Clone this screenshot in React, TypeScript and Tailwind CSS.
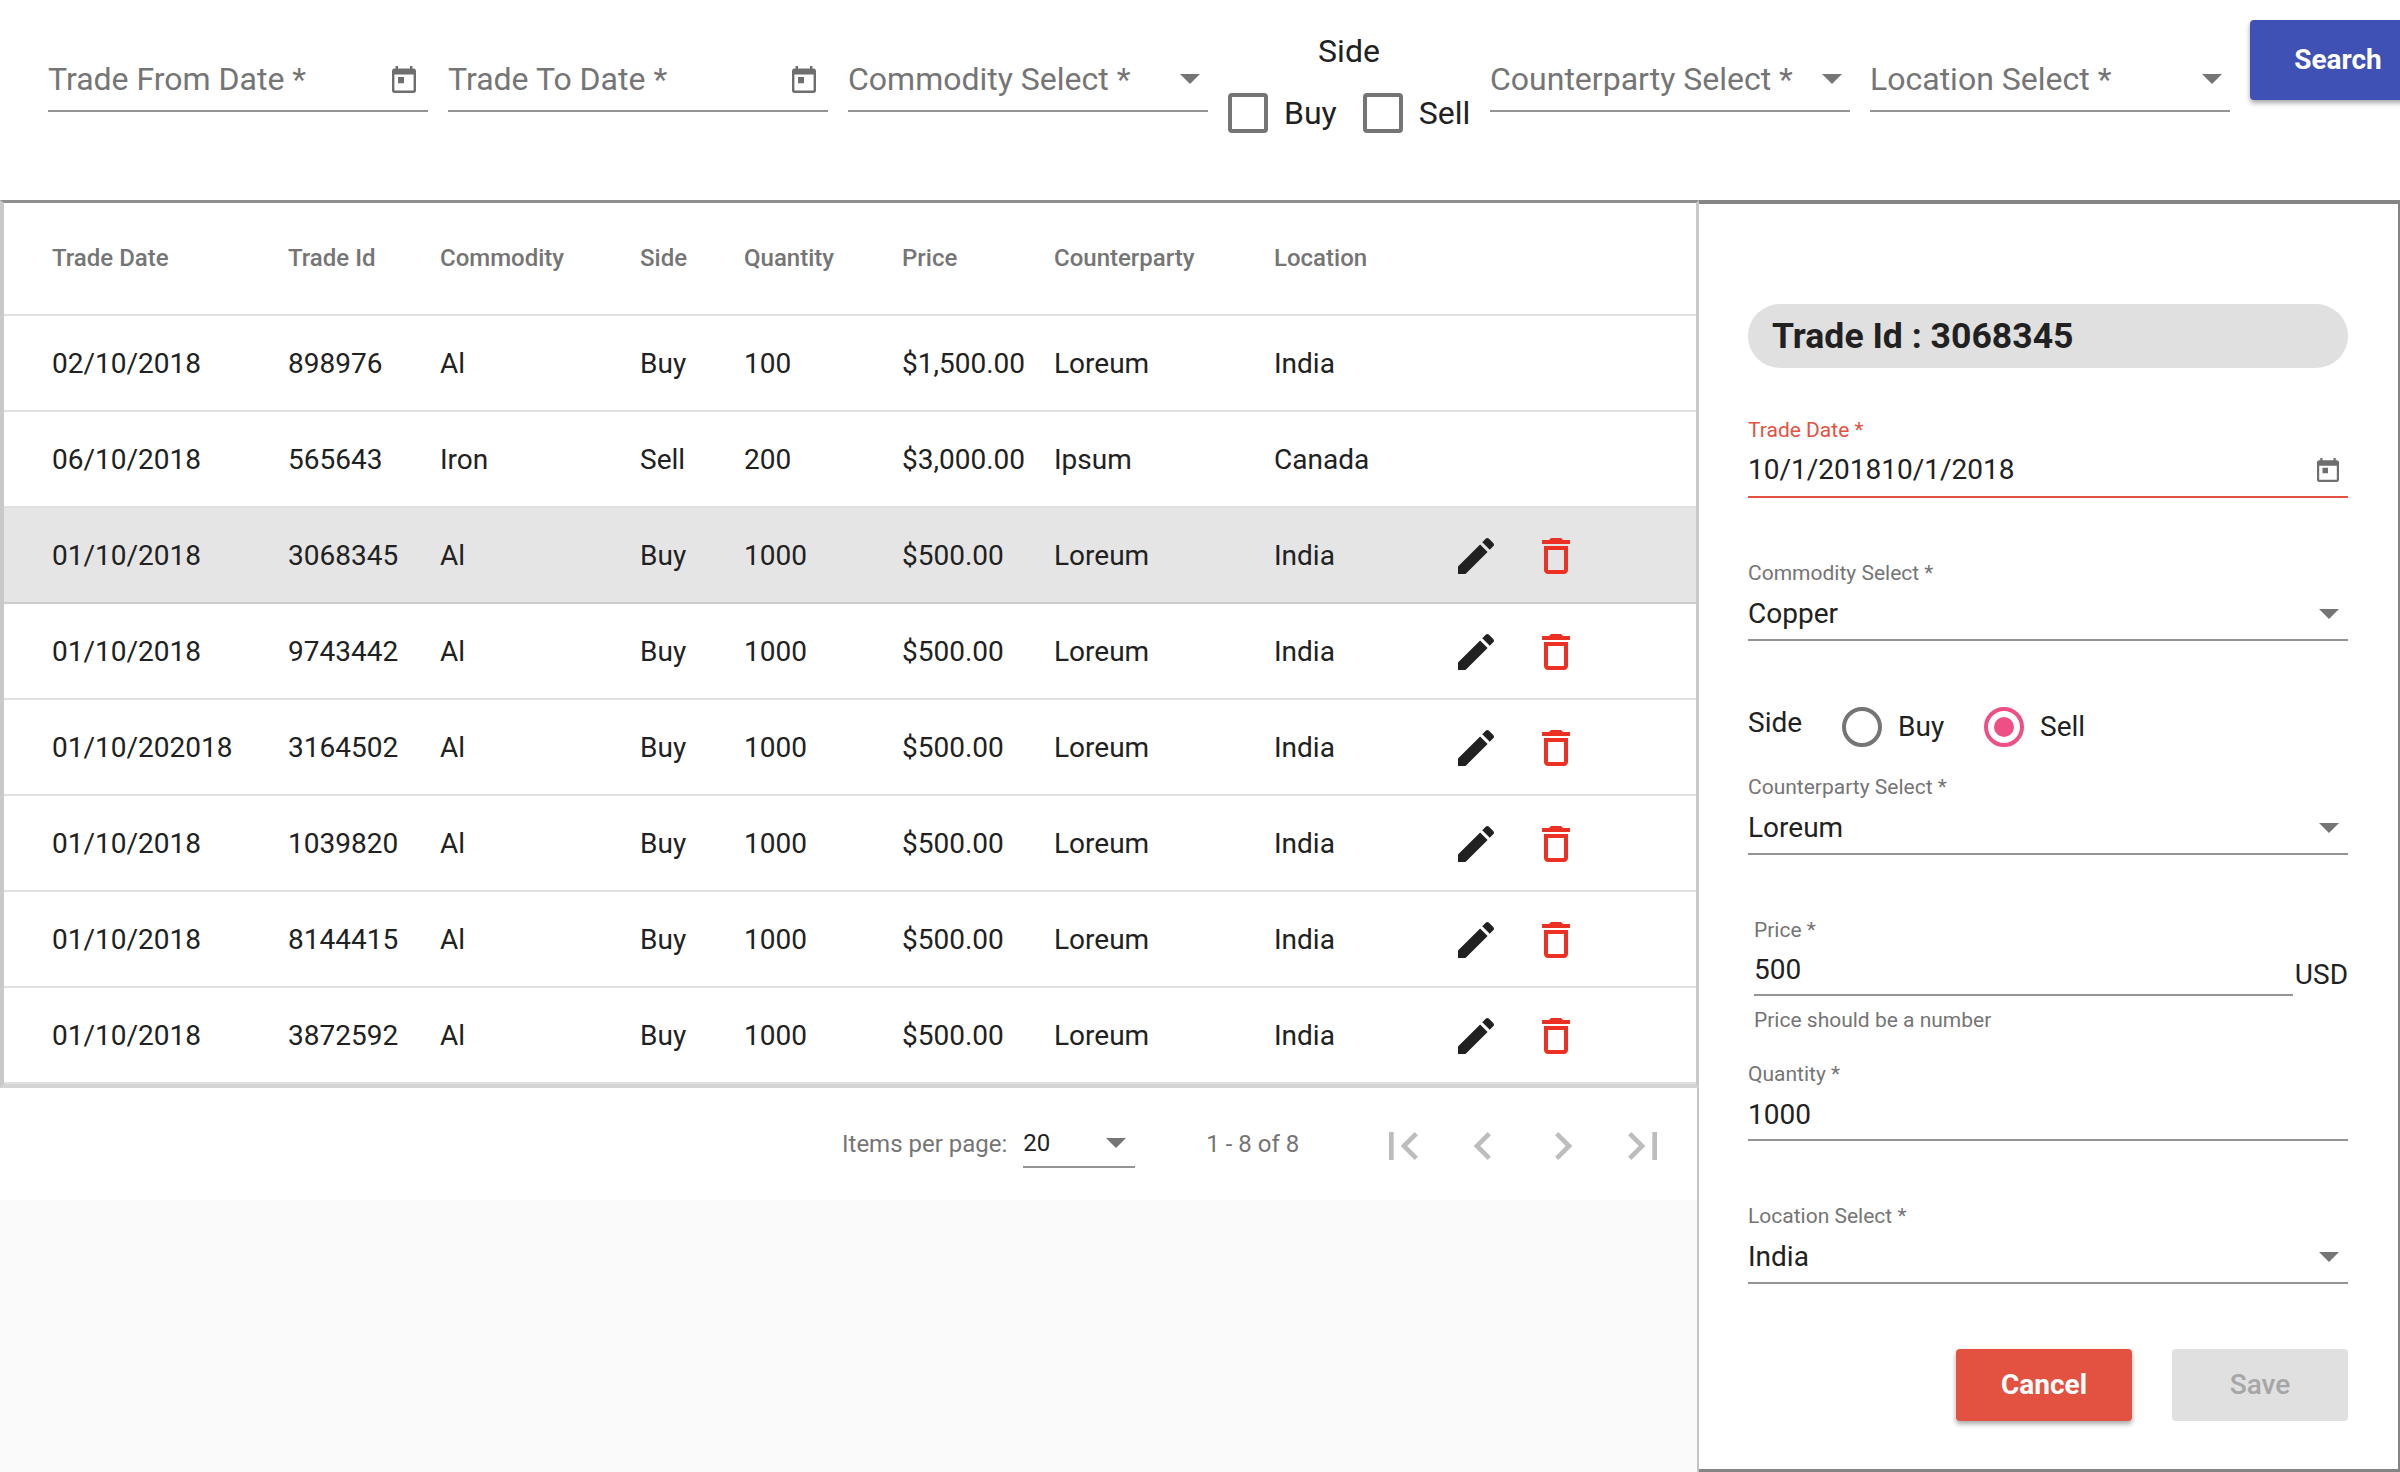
import React from "react";

const CAL = "M20 3h-1V1h-2v2H7V1H5v2H4c-1.1 0-2 .9-2 2v16c0 1.1.9 2 2 2h16c1.1 0 2-.9 2-2V5c0-1.1-.9-2-2-2zm0 18H4V8h16v13zM7 10h5v5H7z";

function CalendarIcon({ className }: { className: string }) {
  return (
    <svg viewBox="2 1 20 22" preserveAspectRatio="none" className={className} fill="#6e6e6e">
      <path d={CAL} />
    </svg>
  );
}

function Arrow() {
  return (
    <svg viewBox="0 0 20 10" className="w-[20px] h-[10px] shrink-0" fill="#757575">
      <polygon points="0,0 20,0 10,10" />
    </svg>
  );
}

function Pencil() {
  return (
    <svg viewBox="0 0 24 24" className="w-[48px] h-[48px]" fill="#212121">
      <path d="M3 17.25V21h3.75L17.81 9.94l-3.75-3.75L3 17.25zM20.71 7.04c.39-.39.39-1.02 0-1.41l-2.34-2.34c-.39-.39-1.02-.39-1.41 0l-1.83 1.83 3.75 3.75 1.83-1.83z" />
    </svg>
  );
}

function Trash() {
  return (
    <svg viewBox="0 0 24 24" className="w-[48px] h-[48px]" fill="#ec3024">
      <path d="M6 19c0 1.1.9 2 2 2h8c1.1 0 2-.9 2-2V7H6v12zM8 9h8v10H8V9zm7.5-5l-1-1h-5l-1 1H5v2h14V4h-3.5z" />
    </svg>
  );
}

function PageIcon({ d }: { d: string }) {
  return (
    <svg viewBox="0 0 24 24" className="w-[56px] h-[56px]" fill="#bdbdbd">
      <path d={d} />
    </svg>
  );
}

function TopField({ label, width, kind }: { label: string; width: string; kind: "date" | "select" }) {
  return (
    <div className={`${width} h-[64px] mt-[48px] shrink-0 flex items-center justify-between border-b-2 border-[#949494] text-[32px] leading-[40px] text-[#757575]`}>
      <span className="whitespace-nowrap">{label}</span>
      {kind === "date" ? (
        <CalendarIcon className="w-[24px] h-[27px] mr-[12px]" />
      ) : (
        <span className="mr-[8px]">
          <Arrow />
        </span>
      )}
    </div>
  );
}

function CheckItem({ label }: { label: string }) {
  return (
    <div className="flex items-center">
      <span className="w-[40px] h-[40px] rounded-[4px] border-[4px] border-[#757575] mr-[16px]" />
      <span>{label}</span>
    </div>
  );
}

function PanelSelect({ label, value, className }: { label: string; value: string; className: string }) {
  return (
    <div className={className}>
      <div className="h-[24px] leading-[24px] text-[21px] text-[#757575]">{label}</div>
      <div className="mt-[9px] h-[40px] leading-[40px] text-[28px] text-[#212121] flex items-center justify-between pr-[9px]">
        <span>{value}</span>
        <Arrow />
      </div>
      <div className="mt-[5px] h-[2px] bg-[#949494]" />
    </div>
  );
}

const rows = [
  ["02/10/2018", "898976", "Al", "Buy", "100", "$1,500.00", "Loreum", "India"],
  ["06/10/2018", "565643", "Iron", "Sell", "200", "$3,000.00", "Ipsum", "Canada"],
  ["01/10/2018", "3068345", "Al", "Buy", "1000", "$500.00", "Loreum", "India"],
  ["01/10/2018", "9743442", "Al", "Buy", "1000", "$500.00", "Loreum", "India"],
  ["01/10/202018", "3164502", "Al", "Buy", "1000", "$500.00", "Loreum", "India"],
  ["01/10/2018", "1039820", "Al", "Buy", "1000", "$500.00", "Loreum", "India"],
  ["01/10/2018", "8144415", "Al", "Buy", "1000", "$500.00", "Loreum", "India"],
  ["01/10/2018", "3872592", "Al", "Buy", "1000", "$500.00", "Loreum", "India"],
];

const headers = ["Trade Date", "Trade Id", "Commodity", "Side", "Quantity", "Price", "Counterparty", "Location"];

export default function App() {
  return (
    <div className="w-[2400px] h-[1472px] overflow-hidden bg-white flex flex-col [font-family:Roboto,sans-serif] text-[#212121]">
      <header className="h-[200px] shrink-0 flex items-start pl-[48px] gap-[20px]">
        <TopField label="Trade From Date *" width="w-[380px]" kind="date" />
        <TopField label="Trade To Date *" width="w-[380px]" kind="date" />
        <TopField label="Commodity Select *" width="w-[360px]" kind="select" />
        <div className="w-[242px] shrink-0 text-[32px] leading-[40px]">
          <div className="text-center mt-[31px]">Side</div>
          <div className="flex gap-[26px] mt-[22px]">
            <CheckItem label="Buy" />
            <CheckItem label="Sell" />
          </div>
        </div>
        <TopField label="Counterparty Select *" width="w-[360px]" kind="select" />
        <TopField label="Location Select *" width="w-[360px]" kind="select" />
        <button className="w-[176px] h-[80px] mt-[20px] shrink-0 rounded-[4px] bg-[#3f51b5] text-white text-[28px] font-bold shadow-[0_3px_5px_rgba(0,0,0,0.35)]">
          Search
        </button>
      </header>

      <main className="flex-1 flex min-h-0">
        <section className="w-[1699px] shrink-0 flex flex-col">
          <div className="border-t-[3px] border-t-[#8f8f8f] border-l-4 border-r-[3px] border-b-4 border-l-[#c9c9c9] border-r-[#c9c9c9] border-b-[#d4d4d4]">
            <div className="h-[113px] border-b-2 border-[#e0e0e0] pl-[48px] pb-[2px] grid grid-cols-[236px_152px_200px_104px_158px_152px_220px_178px] items-center text-[24px] font-medium text-[#757575]">
              {headers.map((h) => (
                <div key={h}>{h}</div>
              ))}
            </div>
            {rows.map((r, i) => (
              <div
                key={r[1]}
                className={`h-[96px] border-b-2 pl-[48px] pt-[2px] grid grid-cols-[236px_152px_200px_104px_158px_152px_220px_178px_80px_48px] items-center text-[28px] ${
                  i === 2 ? "bg-[#e5e5e5] border-[#cccccc]" : "border-[#e0e0e0]"
                }`}
              >
                {r.map((c, j) => (
                  <div key={j} className="whitespace-nowrap">{c}</div>
                ))}
                {i >= 2 && <Pencil />}
                {i >= 2 && <Trash />}
              </div>
            ))}
          </div>
          <div className="h-[112px] shrink-0 bg-white border-r-2 border-r-[#c4c4c4] flex items-center pl-[842px] text-[24px] text-[#757575]">
            <span className="whitespace-nowrap">Items per page:</span>
            <div className="ml-[16px] w-[112px] h-[48px] border-b-2 border-[#949494] flex items-center justify-between pr-[9px] text-[#212121]">
              <span>20</span>
              <Arrow />
            </div>
            <span className="ml-[71px] whitespace-nowrap">1 - 8 of 8</span>
            <div className="ml-[76px] flex gap-[24px] mt-[4px]">
              <PageIcon d="M18.41 16.59L13.82 12l4.59-4.59L17 6l-6 6 6 6zM6 6h2v12H6z" />
              <PageIcon d="M15.41 7.41L14 6l-6 6 6 6 1.41-1.41L10.83 12z" />
              <PageIcon d="M10 6L8.59 7.41 13.17 12l-4.58 4.59L10 18l6-6z" />
              <PageIcon d="M5.59 7.41L10.18 12l-4.59 4.59L7 18l6-6-6-6zM16 6h2v12h-2z" />
            </div>
          </div>
          <div className="flex-1 bg-[#fafafa] border-r-2 border-r-[#c4c4c4]" />
        </section>

        <aside className="flex-1 min-w-0 border-t-[4px] border-t-[#858585] border-r-2 border-r-[#858585] border-b-[3px] border-b-[#858585] pl-[49px] pr-[50px]">
          <div className="mt-[100px] h-[64px] rounded-[32px] bg-[#e0e0e0] pl-[24px] pt-[2px] flex items-center text-[35.6px] font-bold text-[#212121]">
            Trade Id : 3068345
          </div>

          <div className="mt-[50px]">
            <div className="h-[24px] leading-[24px] text-[21px] text-[#e35241]">Trade Date *</div>
            <div className="mt-[8px] h-[40px] leading-[40px] text-[28px] flex items-center justify-between pr-[9px]">
              <span>10/1/201810/1/2018</span>
              <CalendarIcon className="w-[22px] h-[24px]" />
            </div>
            <div className="mt-[6px] h-[2px] bg-[#e35241]" />
          </div>

          <PanelSelect className="mt-[63px]" label="Commodity Select *" value="Copper" />

          <div className="mt-[66px] h-[40px] flex items-center text-[28px] leading-[40px]">
            <span className="-mt-[8px] w-[94px]">Side</span>
            <span className="w-[40px] h-[40px] rounded-full border-[4px] border-[#757575]" />
            <span className="ml-[16px] w-[86px]">Buy</span>
            <span className="w-[40px] h-[40px] rounded-full border-[4px] border-[#ee4f85] flex items-center justify-center">
              <span className="w-[20px] h-[20px] rounded-full bg-[#ee4f85]" />
            </span>
            <span className="ml-[16px]">Sell</span>
          </div>

          <PanelSelect className="mt-[28px]" label="Counterparty Select *" value="Loreum" />

          <div className="mt-[63px] pl-[6px] flex items-start">
            <div className="flex-1 min-w-0">
              <div className="h-[24px] leading-[24px] text-[21px] text-[#757575]">Price *</div>
              <div className="mt-[8px] h-[40px] leading-[40px] text-[28px]">500</div>
              <div className="mt-[4px] h-[2px] bg-[#949494]" />
            </div>
            <span className="text-[28px] leading-[40px] mt-[37px] ml-[2px]">USD</span>
          </div>
          <div className="mt-[12px] pl-[6px] h-[24px] leading-[24px] text-[21px] text-[#757575]">Price should be a number</div>

          <div className="mt-[30px]">
            <div className="h-[24px] leading-[24px] text-[21px] text-[#757575]">Quantity *</div>
            <div className="mt-[9px] h-[40px] leading-[40px] text-[28px]">1000</div>
            <div className="mt-[4px] h-[2px] bg-[#949494]" />
          </div>

          <PanelSelect className="mt-[63px]" label="Location Select *" value="India" />

          <div className="mt-[65px] flex justify-end gap-[40px]">
            <button className="w-[176px] h-[72px] rounded-[4px] bg-[#e35241] text-white text-[28px] font-bold shadow-[0_3px_5px_rgba(0,0,0,0.35)]">
              Cancel
            </button>
            <button className="w-[176px] h-[72px] rounded-[4px] bg-[#e0e0e0] text-[#a6a6a6] text-[28px] font-medium">
              Save
            </button>
          </div>
        </aside>
      </main>
    </div>
  );
}
